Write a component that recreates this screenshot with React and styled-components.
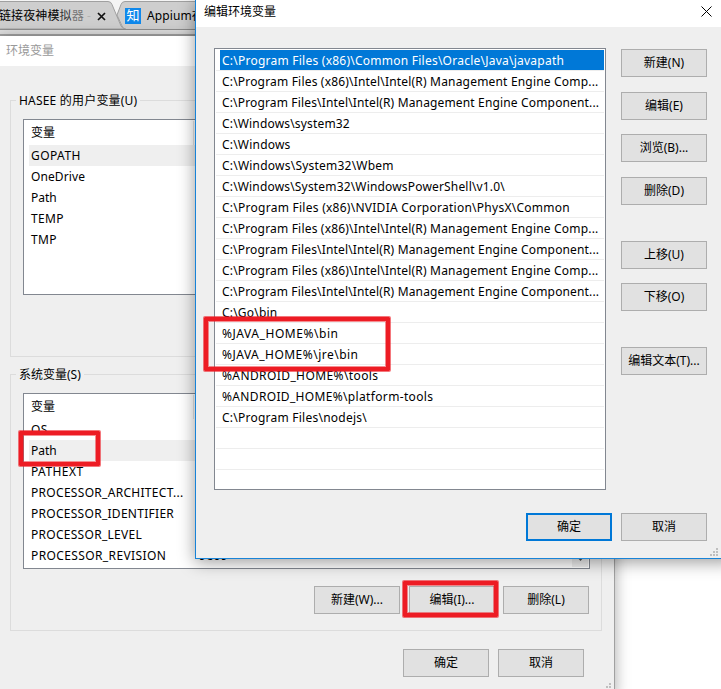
import React from "react";
import styled, { createGlobalStyle } from "styled-components";

const userVars = [
  { name: "GOPATH", spacing: 0.45 },
  { name: "OneDrive", spacing: 0.1 },
  { name: "Path" },
  { name: "TEMP", spacing: 0.35 },
  { name: "TMP", spacing: 0.3 },
];

const systemVars = [
  { name: "OS", spacing: 0.3 },
  { name: "Path" },
  { name: "PATHEXT", spacing: 0.45 },
  { name: "PROCESSOR_ARCHITECT...", spacing: 0.3 },
  { name: "PROCESSOR_IDENTIFIER", spacing: 0.28 },
  { name: "PROCESSOR_LEVEL", spacing: 0.28 },
  { name: "PROCESSOR_REVISION", value: "9e09", spacing: 0.39 },
];

const intelX86 = {
  path: "C:\\Program Files (x86)\\Intel\\Intel(R) Management Engine Comp...",
  spacing: 0.185,
};
const intel = {
  path: "C:\\Program Files\\Intel\\Intel(R) Management Engine Component...",
  spacing: 0.155,
};

const paths = [
  {
    path: "C:\\Program Files (x86)\\Common Files\\Oracle\\Java\\javapath",
    spacing: 0.24,
  },
  intelX86,
  intel,
  { path: "C:\\Windows\\system32", spacing: 0.17 },
  { path: "C:\\Windows", spacing: 0.2 },
  { path: "C:\\Windows\\System32\\Wbem", spacing: 0.22 },
  { path: "C:\\Windows\\System32\\WindowsPowerShell\\v1.0\\", spacing: 0.17 },
  {
    path: "C:\\Program Files (x86)\\NVIDIA Corporation\\PhysX\\Common",
    spacing: 0.26,
  },
  intelX86,
  intel,
  intelX86,
  intel,
  { path: "C:\\Go\\bin", spacing: 0.2 },
  { path: "%JAVA_HOME%\\bin", spacing: 0.55 },
  { path: "%JAVA_HOME%\\jre\\bin", spacing: 0.48 },
  { path: "%ANDROID_HOME%\\tools", spacing: 0.4 },
  { path: "%ANDROID_HOME%\\platform-tools", spacing: 0.34 },
  { path: "C:\\Program Files\\nodejs\\", spacing: 0.24 },
  { path: "" },
  { path: "" },
];

const Grip = () => (
  <GripIcon width="9" height="9" fill="#bfbfbf">
    <path d="M6 0h2v2h-2zM3 3h2v2h-2zM6 3h2v2h-2zM0 6h2v2h-2zM3 6h2v2h-2zM6 6h2v2h-2z" />
  </GripIcon>
);

const TabStrip = () => (
  <Strip>
    <TabShapes width="721" height="36">
      <path d="M-2 1.5H108q3 0 4 3L121 26q2 3 4 3H-2z" fill="#cecece" stroke="#a0a0a0" />
      <path d="M117 15L121 4.500q1-3 4-3H721V29H126q-3 0-4-3z" fill="#cecece" />
      <path d="M117 15L121 4.500q1-3 4-3H721M117 15L122 26q1 3 4 3" fill="none" stroke="#a0a0a0" />
      <path d="M0 29.500H721" stroke="#8f8f8f" />
    </TabShapes>
    <TabTitle>
      链接夜神模<Faded $color="#333">拟</Faded>
      <Faded $color="#777">器</Faded>
      <Faded $color="#b5b5b5"> -</Faded>
    </TabTitle>
    <TabClose width="9" height="9">
      <path d="M1 1l7 7M8 1l-7 7" stroke="#111" strokeWidth="1.700" />
    </TabClose>
    <Zhihu>知</Zhihu>
    <TabTitle>Appium在</TabTitle>
  </Strip>
);

const VarList = ({ rows, selected }) => (
  <ListBox>
    <ListHeader>
      <span>变量</span>
    </ListHeader>
    {rows.map((row) => (
      <VarRow
        key={row.name}
        $selected={row.name === selected}
        $spacing={row.spacing}
      >
        <span>{row.name}</span>
        {row.value && <span>{row.value}</span>}
      </VarRow>
    ))}
  </ListBox>
);

const App = () => {
  return (
    <Desktop>
      <GlobalStyle />
      <TabStrip />

      {/* ============ environment variables window ============ */}
      <EnvWindow>
        <EnvTitle>环境变量</EnvTitle>
        <EnvBody>
          <Group>
            <Legend $spacing={0.2}>HASEE 的用户变量(U)</Legend>
            <VarList rows={userVars} selected="GOPATH" />
          </Group>
          <Group>
            <Legend>系统变量(S)</Legend>
            <VarList rows={systemVars} selected="Path" />
            <ScrollDown>
              <svg width="7" height="5">
                <path d="M0 0h7L3.500 4z" fill="#505050" />
              </svg>
            </ScrollDown>
            <GroupButtons>
              <Button>新建(W)...</Button>
              <Button>编辑(I)...</Button>
              <Button>删除(L)</Button>
            </GroupButtons>
          </Group>
          <EnvFooter>
            <Button>确定</Button>
            <Button>取消</Button>
          </EnvFooter>
        </EnvBody>
        <Grip />
      </EnvWindow>

      {/* ============ edit dialog ============ */}
      <Dialog>
        <DialogTitle>
          <span>编辑环境变量</span>
          <svg width="11" height="11">
            <path d="M.5.5l10 10M10.500.5l-10 10" stroke="#000" />
          </svg>
        </DialogTitle>
        <DialogBody>
          <PathList>
            {paths.map((row, i) => (
              <PathRow key={i}>
                <PathText $selected={i === 0} $spacing={row.spacing}>
                  {row.path}
                </PathText>
              </PathRow>
            ))}
          </PathList>
          <ButtonColumn>
            <Button>新建(N)</Button>
            <Button $top={15}>编辑(E)</Button>
            <Button $top={14}>浏览(B)...</Button>
            <Button $top={15}>删除(D)</Button>
            <Button $top={36}>上移(U)</Button>
            <Button $top={14}>下移(O)</Button>
            <Button $top={36}>编辑文本(T)...</Button>
          </ButtonColumn>
        </DialogBody>
        <DialogFooter>
          <Button $primary>确定</Button>
          <Button>取消</Button>
        </DialogFooter>
        <Grip />
      </Dialog>

      <Marker $x={204} $y={317} $w={186} $h={54} />
      <Marker $x={19} $y={431} $w={81} $h={35} />
      <Marker $x={403} $y={581} $w={95} $h={36} />
    </Desktop>
  );
};

const GlobalStyle = createGlobalStyle`
  * {
    box-sizing: border-box;
  }
  body {
    margin: 0;
    overflow: hidden;
    font-family: "Noto Sans", "Noto Sans CJK SC", sans-serif;
    font-size: 12px;
    color: #000;
  }
  svg {
    display: block;
  }
`;

const Desktop = styled.div`
  position: relative;
  width: 721px;
  height: 689px;
  overflow: hidden;
  background: #fff;
`;

const Strip = styled.div`
  position: relative;
  display: flex;
  align-items: center;
  height: 36px;
  padding-bottom: 4px;
  white-space: nowrap;
`;

const TabShapes = styled.svg`
  position: absolute;
  top: 0;
  left: 0;
  background: linear-gradient(#f4f4f4 30px, #dedede 30px 34px, #a2a2a2 34px);
`;

const TabTitle = styled.span`
  position: relative;
  flex: none;
  min-width: 96px;
  margin-left: -1px;
  line-height: 20px;
  letter-spacing: 0.1px;
`;

const Faded = styled.span`
  color: ${(props) => props.$color};
  white-space: pre;
`;

const TabClose = styled.svg`
  position: relative;
  flex: none;
  margin: 1px 19px 0 2px;
`;

const Zhihu = styled.span`
  position: relative;
  flex: none;
  width: 16px;
  height: 16px;
  margin-right: 7px;
  background: #0f88eb;
  color: #fff;
  font-size: 13px;
  line-height: 15px;
  text-align: center;
`;

const EnvWindow = styled.div`
  position: absolute;
  top: 36px;
  left: 0;
  width: 615px;
  height: 660px;
  background: #efefef;
  border-right: 1px solid #a0a0a0;
  box-shadow: 0 2px 14px rgba(0, 0, 0, 0.35);
  > svg {
    bottom: 4px;
    right: 2px;
  }
`;

const EnvTitle = styled.div`
  height: 30px;
  padding-left: 6px;
  background: #fff;
  color: #999;
  line-height: 29px;
`;

const EnvBody = styled.div`
  display: flex;
  flex-direction: column;
  padding: 34px 12px 0 10px;
`;

const Group = styled.div`
  position: relative;
  height: 257px;
  margin-bottom: 17px;
  padding: 18px 11px 0 12px;
  border: 1px solid #dcdcdc;
`;

const Legend = styled.span`
  position: absolute;
  top: -10px;
  left: 5px;
  padding: 0 3px;
  background: #efefef;
  letter-spacing: ${(props) => props.$spacing || 0}px;
  line-height: 20px;
`;

const ListBox = styled.div`
  height: 176px;
  padding: 1px 1px 0 5px;
  overflow: hidden;
  background: #fff;
  border: 1px solid #828790;
`;

const ListHeader = styled.div`
  width: 165px;
  height: 24px;
  padding-left: 2px;
  border-right: 1px solid #e5e5e5;
  line-height: 23px;
`;

const VarRow = styled.div`
  display: grid;
  grid-template-columns: 168px auto;
  height: 21px;
  padding-left: 2px;
  background: ${(props) => (props.$selected ? "#efefef" : "#fff")};
  letter-spacing: ${(props) => props.$spacing || 0}px;
  line-height: 21px;
  white-space: nowrap;
`;

const ScrollDown = styled.div`
  position: absolute;
  top: 176px;
  right: 13px;
  display: flex;
  justify-content: center;
  align-items: center;
  width: 16px;
  height: 16px;
  background: #efefef;
`;

const GroupButtons = styled.div`
  display: flex;
  justify-content: flex-end;
  gap: 8px;
  padding-top: 17px;
  padding-right: 1px;
  button:first-child {
    margin-right: 1px;
  }
`;

const EnvFooter = styled.div`
  display: flex;
  justify-content: flex-end;
  gap: 9px;
  padding: 1px 18px 0 0;
`;

const Button = styled.button`
  flex: none;
  width: 86px;
  height: 28px;
  margin: ${(props) => props.$top || 0}px 0 0;
  padding: 0;
  background: #e1e1e1;
  border: ${(props) => (props.$primary ? "2px solid #0078d7" : "1px solid #adadad")};
  color: #000;
  font: inherit;
  line-height: 20px;
  white-space: nowrap;
`;

const Dialog = styled.div`
  position: absolute;
  top: -1px;
  left: 195px;
  width: 540px;
  height: 560px;
  background: #efefef;
  border: 1px solid #1883d7;
  box-shadow: 0 3px 16px rgba(0, 0, 0, 0.4);
  > svg {
    bottom: 1px;
    right: 15px;
  }
`;

const DialogTitle = styled.div`
  display: flex;
  justify-content: space-between;
  height: 27px;
  padding: 0 22px 0 8px;
  background: #fff;
  line-height: 23px;
  svg {
    margin-top: 6px;
  }
`;

const DialogBody = styled.div`
  display: flex;
  gap: 15px;
  padding: 21px 0 0 18px;
`;

const PathList = styled.div`
  width: 392px;
  height: 442px;
  padding: 1px;
  background: #fff;
  border: 1px solid #828790;
`;

const PathRow = styled.div`
  height: 21px;
  padding-left: 4px;
  border-bottom: 1px solid #ededed;
`;

const PathText = styled.div`
  height: 20px;
  padding-left: 2px;
  background: ${(props) => (props.$selected ? "#0078d7" : "#fff")};
  color: ${(props) => (props.$selected ? "#fff" : "#000")};
  letter-spacing: ${(props) => props.$spacing || 0}px;
  line-height: 22px;
  white-space: nowrap;
`;

const ButtonColumn = styled.div`
  display: flex;
  flex-direction: column;
  padding-top: 1px;
`;

const DialogFooter = styled.div`
  display: flex;
  gap: 9px;
  padding: 23px 0 0 330px;
`;

const GripIcon = styled.svg`
  position: absolute;
`;

const Marker = styled.div`
  position: absolute;
  top: ${(props) => props.$y}px;
  left: ${(props) => props.$x}px;
  width: ${(props) => props.$w}px;
  height: ${(props) => props.$h}px;
  border: 4px solid #ed1c24;
  border-radius: 1px;
  box-shadow: 0 0 0 1px rgba(237, 28, 36, 0.6),
    inset 0 0 0 1px rgba(237, 28, 36, 0.5);
`;

export default App;
